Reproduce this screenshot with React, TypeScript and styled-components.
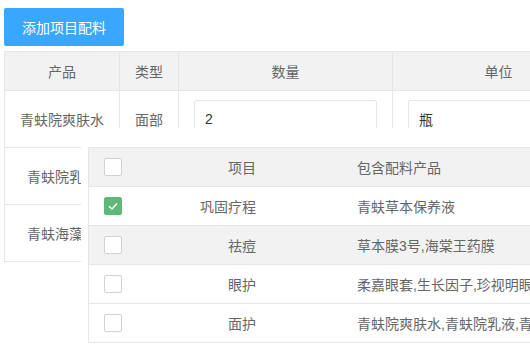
import styled, {createGlobalStyle} from 'styled-components';

const BORDER = '#e6e6e6';
const HEAD_BG = '#f2f2f2';
const TEXT = '#666';

const GlobalStyle = createGlobalStyle`
  html, body {
    margin: 0;
    padding: 0;
    background: #fff;
    overflow: hidden;
  }
  body {
    font-family: "Liberation Sans", "Noto Sans CJK SC", sans-serif;
    font-size: 14px;
    color: ${TEXT};
  }
  * {
    box-sizing: border-box;
  }
`;

const products = [
  {name: '青蚨院爽肤水', type: '面部', amount: '2', unit: '瓶'},
  {name: '青蚨院乳液', type: '面部', amount: '1', unit: '瓶'},
  {name: '青蚨海藻泥', type: '面部', amount: '1', unit: '盒'},
];

const projects = [
  {name: '巩固疗程', items: '青蚨草本保养液', checked: true, hover: false},
  {name: '祛痘', items: '草本膜3号,海棠王药膜', checked: false, hover: true},
  {name: '眼护', items: '柔嘉眼套,生长因子,珍视明眼贴,眼部精华', checked: false, hover: false},
  {name: '面护', items: '青蚨院爽肤水,青蚨院乳液,青蚨海藻泥', checked: false, hover: false},
];

const Check = ({checked}: {checked: boolean}) => (
  <StyledCheckbox $checked={checked}>
    {checked && (
      <svg width="12" height="12" viewBox="0 0 12 12">
        <polyline points="2,6.3 5,9 10,3.5" fill="none" stroke="#fff" strokeWidth="1.4" />
      </svg>
    )}
  </StyledCheckbox>
);

const App = () => {
  return (
    <StyledPage>
      <GlobalStyle />
      <StyledButton>添加项目配料</StyledButton>

      <StyledTable>
        <StyledHeadCell>产品</StyledHeadCell>
        <StyledHeadCell>类型</StyledHeadCell>
        <StyledHeadCell>数量</StyledHeadCell>
        <StyledHeadCell>单位</StyledHeadCell>
        {products.map((p) => (
          <StyledRowGroup key={p.name}>
            <StyledCell>{p.name}</StyledCell>
            <StyledCell>{p.type}</StyledCell>
            <StyledCell>
              <StyledInput defaultValue={p.amount} />
            </StyledCell>
            <StyledCell>
              <StyledInput defaultValue={p.unit} />
            </StyledCell>
          </StyledRowGroup>
        ))}
      </StyledTable>

      <StyledOverlay>
        <StyledMaskStrip />
        <StyledPopupBody>
          <StyledPopupTable>
            <StyledPopupRow $gray>
              <StyledPopupCell>
                <Check checked={false} />
              </StyledPopupCell>
              <StyledNameCell>项目</StyledNameCell>
              <StyledPopupCell>包含配料产品</StyledPopupCell>
            </StyledPopupRow>
            {projects.map((p) => (
              <StyledPopupRow key={p.name} $gray={p.hover}>
                <StyledPopupCell>
                  <Check checked={p.checked} />
                </StyledPopupCell>
                <StyledNameCell>{p.name}</StyledNameCell>
                <StyledPopupCell>{p.items}</StyledPopupCell>
              </StyledPopupRow>
            ))}
          </StyledPopupTable>
        </StyledPopupBody>
      </StyledOverlay>
    </StyledPage>
  );
};

export default App;

const StyledPage = styled.div`
  position: relative;
  width: 530px;
  height: 360px;
  padding: 8px 0 0 4px;
  overflow: hidden;
`;

const StyledButton = styled.button`
  display: block;
  width: 120px;
  height: 38px;
  margin-bottom: 5px;
  padding: 0;
  border: none;
  border-radius: 2px;

  font-family: inherit;
  font-size: 14px;

  background-color: #38a7ff;
  color: #fff;
`;

const StyledTable = styled.div`
  display: grid;
  grid-template-columns: 115px 59px 214px 212px;
  width: 601px;
  border-top: 1px solid ${BORDER};
  border-left: 1px solid ${BORDER};
`;

const StyledRowGroup = styled.div`
  display: contents;
`;

const StyledHeadCell = styled.div`
  display: flex;
  align-items: center;
  justify-content: center;
  height: 39px;
  border-right: 1px solid ${BORDER};
  border-bottom: 1px solid ${BORDER};
  background: ${HEAD_BG};
`;

const StyledCell = styled.div`
  display: flex;
  align-items: center;
  justify-content: center;
  height: 57px;
  padding: 0 15px;
  border-right: 1px solid ${BORDER};
  border-bottom: 1px solid ${BORDER};
  white-space: nowrap;
`;

const StyledInput = styled.input`
  width: 100%;
  height: 38px;
  padding: 0 10px;
  border: 1px solid ${BORDER};
  border-radius: 2px;
  outline: none;

  font-family: inherit;
  font-size: 14px;
  color: #333;
`;

const StyledOverlay = styled.div`
  position: absolute;
  top: 128px;
  left: 5px;
  right: 0;
  bottom: 0;
  display: flex;
  flex-direction: column;
`;

const StyledMaskStrip = styled.div`
  height: 19px;
  background: #fff;
`;

const StyledPopupBody = styled.div`
  flex: 1;
  margin-left: 76px;
  padding-left: 7px;
  background: #fff;
`;

const StyledPopupTable = styled.div`
  width: 520px;
  border-top: 1px solid ${BORDER};
  border-left: 1px solid ${BORDER};
`;

const StyledPopupRow = styled.div<{$gray?: boolean}>`
  display: grid;
  grid-template-columns: 50px 203px 1fr;
  height: 39px;
  border-bottom: 1px solid ${BORDER};
  background: ${(p) => (p.$gray ? HEAD_BG : '#fff')};
`;

const StyledPopupCell = styled.div`
  display: flex;
  align-items: center;
  padding: 0 15px;
  white-space: nowrap;
  overflow: hidden;
`;

const StyledNameCell = styled(StyledPopupCell)`
  justify-content: flex-end;
  padding-right: 86px;
`;

const StyledCheckbox = styled.span<{$checked: boolean}>`
  display: flex;
  align-items: center;
  justify-content: center;
  width: 18px;
  height: 18px;
  border-radius: 2px;
  border: 1px solid ${(p) => (p.$checked ? '#5fb878' : '#d2d2d2')};
  background: ${(p) => (p.$checked ? '#5fb878' : '#fff')};
`;
